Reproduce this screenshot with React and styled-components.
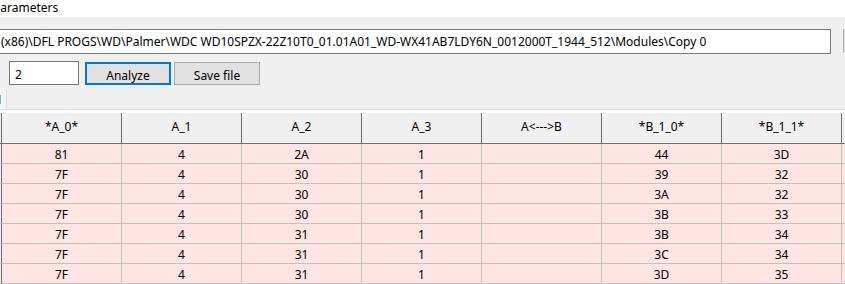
import React from 'react';
import styled, { createGlobalStyle } from 'styled-components';

const GlobalStyle = createGlobalStyle`
  html, body {
    margin: 0;
    padding: 0;
    overflow: hidden;
    background: #f0f0f0;
  }
  body {
    font-family: "Noto Sans", "Liberation Sans", sans-serif;
    font-size: 12px;
    color: #000;
  }
`;

const Window = styled.div`
  width: 845px;
  height: 284px;
  overflow: hidden;
  display: flex;
  flex-direction: column;
`;

const TitleBar = styled.div`
  height: 20px;
  background: #fff;
  white-space: nowrap;
  line-height: 15px;
  text-indent: -7px;
`;

const Panel = styled.div`
  flex: 1;
  display: flex;
  flex-direction: column;
  background: #f0f0f0;
`;

const PathRow = styled.div`
  display: flex;
  align-items: flex-start;
  gap: 12px;
  margin-top: 12px;
  margin-left: -3px;
`;

const TextBox = styled.div`
  box-sizing: border-box;
  width: ${(p) => p.$width}px;
  height: ${(p) => p.$height}px;
  border: 1px solid #7a7a7a;
  background: #fff;
  padding: ${(p) => p.$top}px ${(p) => p.$pad}px 0;
  line-height: ${(p) => p.$height - 2 - p.$top}px;
  white-space: nowrap;
  overflow: hidden;
  flex-shrink: 0;
`;

const EdgeButton = styled.div`
  box-sizing: border-box;
  width: 40px;
  height: 23px;
  border: 1px solid #adadad;
  background: #e1e1e1;
  flex-shrink: 0;
`;

const ControlsRow = styled.div`
  display: flex;
  align-items: flex-start;
  margin-top: 7px;
  margin-left: 9px;
`;

const Button = styled.button`
  box-sizing: border-box;
  width: 86px;
  height: 23px;
  margin-top: 1px;
  margin-left: ${(p) => p.$gap}px;
  padding: 3px 0 0;
  font: inherit;
  line-height: 15px;
  color: #000;
  background: #e1e1e1;
  border: ${(p) => (p.$focused ? '2px solid #0078d7' : '1px solid #adadad')};
  cursor: default;
`;

const TabStrip = styled.div`
  display: flex;
  margin-top: 5px;
  height: 19px;
  border-bottom: 1px solid #dadada;
`;

const Tab = styled.div`
  width: 6px;
  height: 19px;
  border-right: 1px solid #d9d9d9;
  background: #f5f5f5;
  overflow: hidden;
  text-indent: -4px;
  line-height: 19px;
  color: #1a3a6a;
`;

const Grid = styled.div`
  display: grid;
  grid-template-columns: 2px repeat(7, 120px) 60px;
  border-top: 3px solid #fff;
`;

const HeadCell = styled.div`
  box-sizing: border-box;
  height: 31px;
  padding-top: 6px;
  line-height: 16px;
  text-align: center;
  background: #f0f0f0;
  border-right: 1px solid #6e6e6e;
  border-bottom: 1px solid #6e6e6e;
  white-space: nowrap;
`;

const RowHead = styled.div`
  box-sizing: border-box;
  height: ${(p) => (p.$head ? 31 : 20)}px;
  background: #f0f0f0;
  border-right: 1px solid #6e6e6e;
  border-bottom: 1px solid ${(p) => (p.$head ? '#6e6e6e' : '#c8c8c8')};
`;

const Cell = styled.div`
  box-sizing: border-box;
  height: 20px;
  padding-top: 3px;
  line-height: 16px;
  text-align: center;
  background: #ffe4e4;
  border-right: 1px solid #c8c0c0;
  border-bottom: 1px solid #c8c0c0;
`;

const columns = ['*A_0*', 'A_1', 'A_2', 'A_3', 'A<--->B', '*B_1_0*', '*B_1_1*', ''];

const rows = [
  ['81', '4', '2A', '1', '', '44', '3D', ''],
  ['7F', '4', '30', '1', '', '39', '32', ''],
  ['7F', '4', '30', '1', '', '3A', '32', ''],
  ['7F', '4', '30', '1', '', '3B', '33', ''],
  ['7F', '4', '31', '1', '', '3B', '34', ''],
  ['7F', '4', '31', '1', '', '3C', '34', ''],
  ['7F', '4', '31', '1', '', '3D', '35', ''],
];

const path =
  '(x86)\\DFL PROGS\\WD\\Palmer\\WDC WD10SPZX-22Z10T0_01.01A01_WD-WX41AB7LDY6N_0012000T_1944_512\\Modules\\Copy 0';

export default function App() {
  return (
    <Window>
      <GlobalStyle />
      <TitleBar>Parameters</TitleBar>
      <Panel>
        <PathRow>
          <TextBox $width={834} $height={25} $pad={3} $top={1}>{path}</TextBox>
          <EdgeButton />
        </PathRow>
        <ControlsRow>
          <TextBox $width={70} $height={24} $pad={5} $top={3}>2</TextBox>
          <Button $focused $gap={6}>Analyze</Button>
          <Button $gap={3}>Save file</Button>
        </ControlsRow>
        <TabStrip>
          <Tab>1</Tab>
        </TabStrip>
        <Grid>
          <RowHead $head />
          {columns.map((c, i) => (
            <HeadCell key={i}>{c}</HeadCell>
          ))}
          {rows.map((r, ri) => (
            <React.Fragment key={ri}>
              <RowHead />
              {r.map((v, ci) => (
                <Cell key={ci}>{v}</Cell>
              ))}
            </React.Fragment>
          ))}
        </Grid>
      </Panel>
    </Window>
  );
}
